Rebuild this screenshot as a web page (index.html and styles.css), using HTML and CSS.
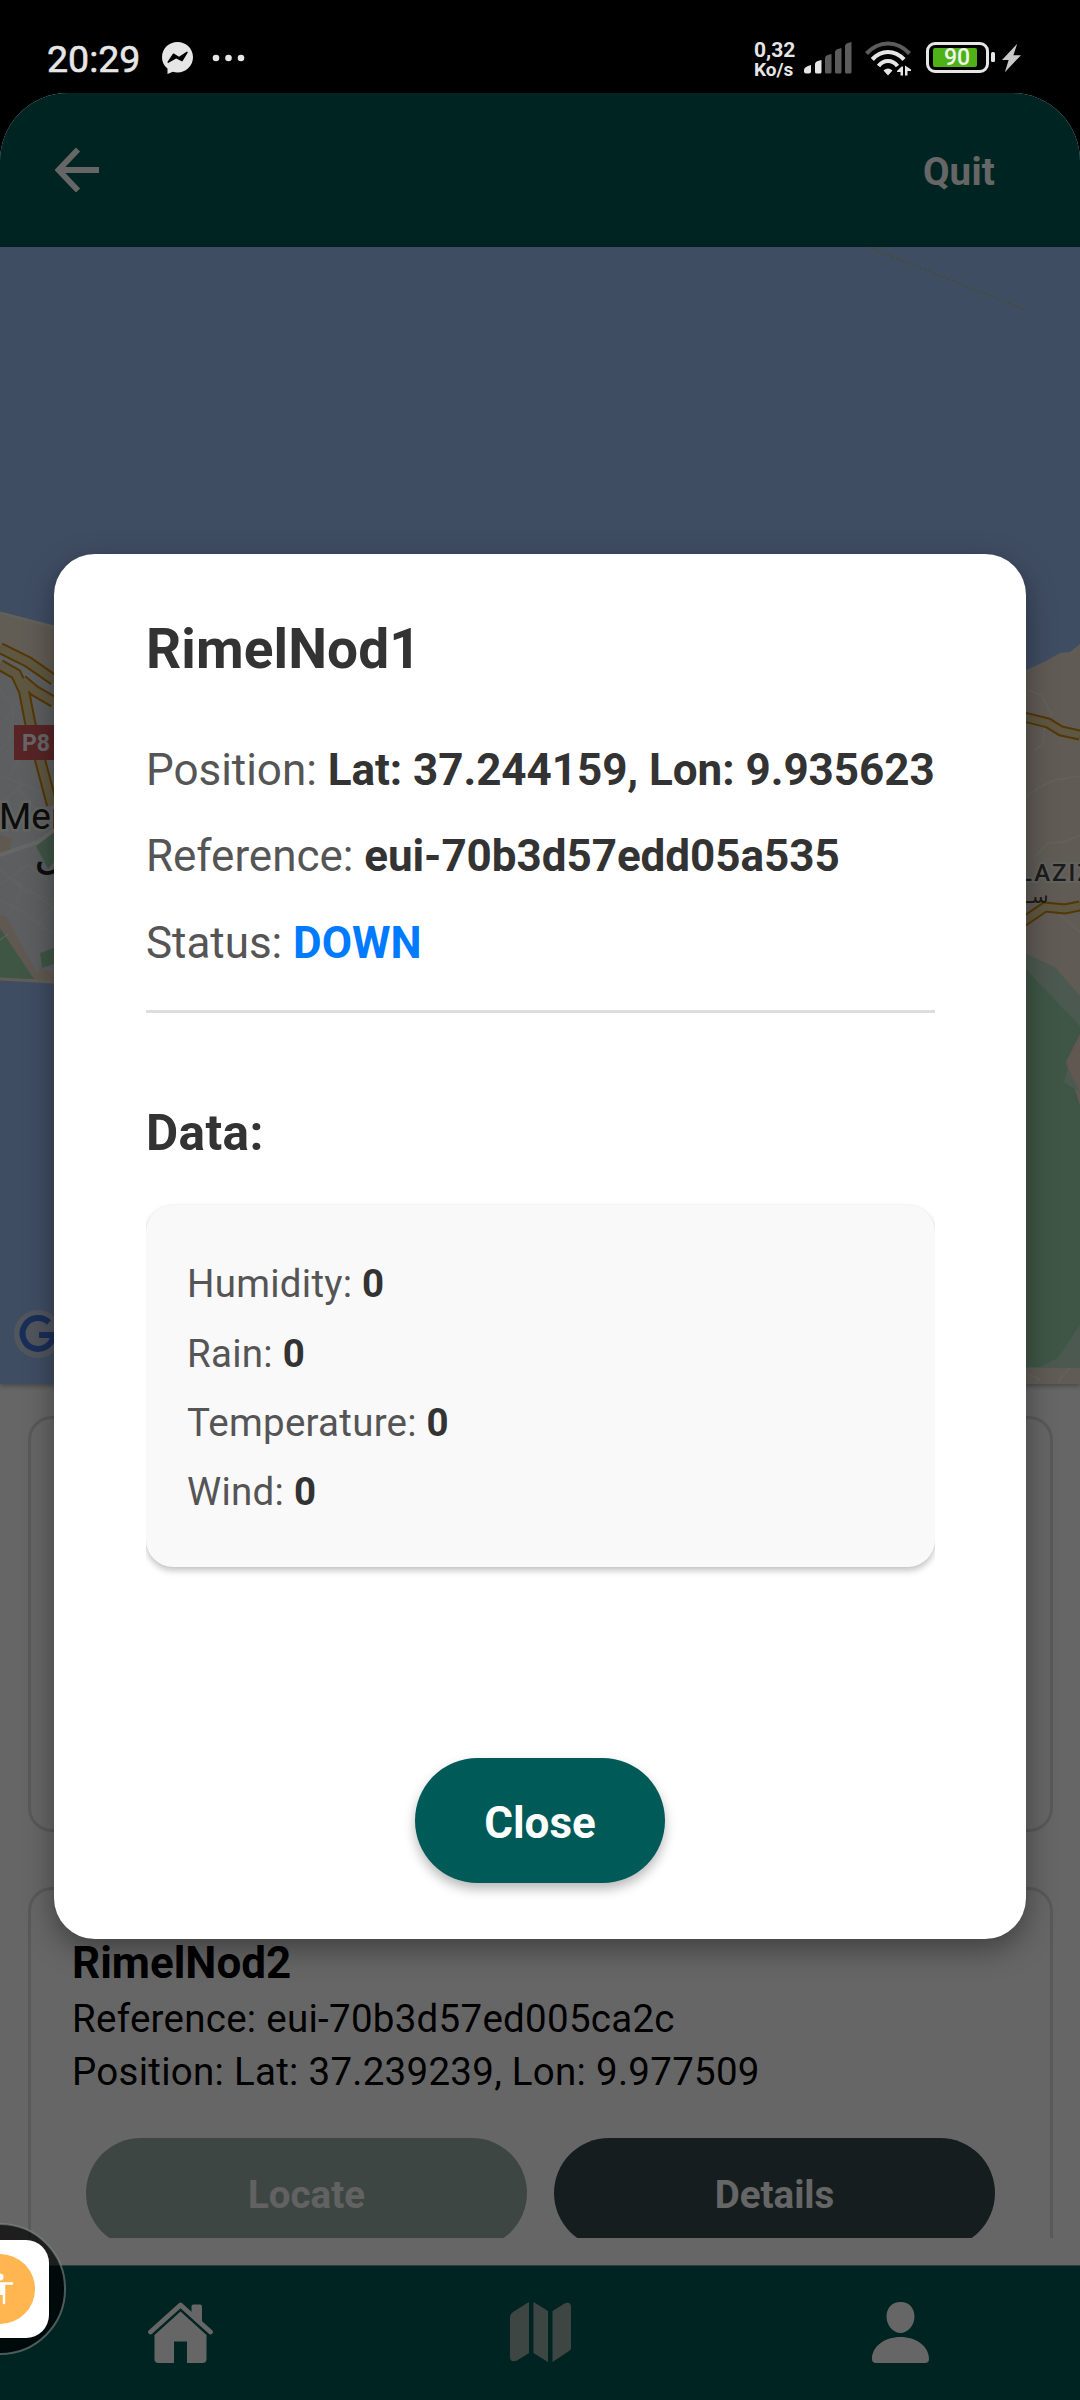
FILE: index.html
```html
<!DOCTYPE html>
<html lang="en">
<head>
<meta charset="utf-8">
<title>Nodes</title>
<link rel="stylesheet" href="styles.css">
</head>
<body>
<div class="phone">
  <div class="status">
    <div class="status-left">
      <span class="clock">20:29</span>
      <svg class="messenger" viewBox="0 0 31 32"><path fill="#e6e6e6" d="M15.500 0C7 0 0 6.600 0 15.200c0 4.500 1.900 8.400 5.500 11.200V32l5.300-2.300c1.500.5 3.100.7 4.700.7C24 30.400 31 23.800 31 15.200S24 0 15.500 0Z"/><path d="M6.200 20.200 11.500 12.200 17 15.700 25 10.300 20 18.700 14.200 15.500Z" fill="#000" stroke="#000" stroke-width="1.500" stroke-linejoin="round"/></svg>
      <svg class="dots" viewBox="0 0 34 8" fill="#e6e6e6"><circle cx="4" cy="4" r="3.300"/><circle cx="16.500" cy="4" r="3.300"/><circle cx="29" cy="4" r="3.300"/></svg>
    </div>
    <div class="status-right">
      <div class="speed"><span>0,32</span><span class="unit">Ko/s</span></div>
      <svg class="signal" viewBox="0 0 48 32" fill="#e6e6e6"><path d="M0 28q0-3 7-5v6.500q0 2-2 2H2q-2 0-2-2Z"/><path d="M11 22q0-3 6.500-4v12q0 1.500-1.500 1.500h-3.500q-1.500 0-1.500-1.500Z"/><g fill="#5c5c5c"><path d="M21 16q0-3 6.500-4v18q0 1.500-1.500 1.500h-3.500q-1.500 0-1.500-1.500Z"/><path d="M31 10q0-3 6.500-4v24q0 1.500-1.500 1.500h-3.500q-1.500 0-1.500-1.500Z"/><path d="M41 4q0-3 6.500-4v30q0 1.500-1.500 1.500h-3.500q-1.500 0-1.500-1.500Z"/></g></svg>
      <svg class="wifi" viewBox="0 0 46 35" fill="none" stroke="#e6e6e6" stroke-width="4.200"><path d="M1.500 12.500Q11 2.500 23 2.500t21.500 10" stroke="#5c5c5c"/><path d="M7.300 18.500Q14 11 23 11t16 7.500M13.500 25Q17.500 20 23 20t9.500 5"/><path fill="#e6e6e6" stroke="none" d="M18.500 29.500Q23 25.500 27.500 29.500L23 34.500ZM32 30l4.500-4.500h1.500v9h-2.500v-3.500H32ZM40 24.500V34.500h2.500v-4.500H46v-1.500Z"/></svg>
      <div class="battery"><div class="cell"><span>90</span></div></div>
      <svg class="nub" viewBox="0 0 4 10"><rect width="4" height="10" rx="1.500" fill="#e6e6e6"/></svg>
      <svg class="bolt" viewBox="0 0 20 30"><path fill="#c9c9c9" d="M16 0 0 17h7L3 30 20 12h-8Z"/></svg>
    </div>
  </div>

  <div class="app">
    <header class="topbar">
      <svg class="back" viewBox="0 0 44 44"><path d="M23 1.500 3.500 22l19.500 20.500M3.500 22H44" fill="none" stroke="#fff" stroke-width="5.800"/></svg>
      <span class="quit">Quit</span>
    </header>

    <svg class="map" viewBox="0 247 1080 1137">
      <rect y="247" width="1080" height="1137" fill="#9ec1f8"/>
      <path d="M868 247 1024 309" fill="none" stroke="#b0b97e" stroke-width="1.400" stroke-dasharray="3 2"/>
      <!-- west shore -->
      <path d="M0 613 54 627H120V982H54L0 979Z" fill="#e6ecf0"/>
      <path d="M0 613 54 627V676L0 644Z" fill="#f2e5d2"/>
      <path d="M0 613 54 627" stroke="#f3efdf" stroke-width="3"/>
      <g stroke="#f8f6f0" stroke-width="1.200" fill="none" opacity=".75">
        <path d="M0 690 20 715M10 697l15 15M6 720l18-28M0 750l14-14M14 710l-5 28M25 665l24 22M0 775l54 22M10 778l10-22 20 6M0 805l22-20M16 786l20 24M0 870l54 38M0 885l28-20 24 20M8 915l14-25 32 10M0 900l20 10 34 24M14 880l12 14M36 925l18-18M38 930l5-2"/>
      </g>
      <g fill="none" stroke="#cf8a0a" stroke-width="12"><path d="M0 648 28 662 54 680M0 665 16 674 24 691 30 722 52 805M22 680 35 691 54 702"/></g>
      <g fill="none" stroke="#ecd9a4" stroke-width="8"><path d="M0 648 28 662 54 680M0 665 16 674 24 691 30 722 52 805M22 680 35 691 54 702"/></g>
      <path d="M0 835l12 3-2 12-10 3Z" fill="#f0dfcb"/>
      <path d="M36 846 54 832V862l-6 7Z" fill="#9dd2ae"/>
      <path d="M0 855 38 842 54 830" fill="none" stroke="#fff" stroke-width="4"/>
      <path d="M0 915 6 916 40 979H0Z" fill="#f0dfcb"/>
      <path d="M0 928 34 979H0Z" fill="#9dd7ad"/>
      <path d="M0 940l8-6" stroke="#fff"/>
      <path d="M40 953 54 948V964L42 968Z" fill="#9dd7ad"/>
      <path d="M36 982 40 966 54 975V983Z" fill="#f0dfcb"/>
      <path d="M0 979 54 982" stroke="#f3e9d7" stroke-width="3"/>
      <rect x="14" y="725" width="60" height="35" fill="#dc5a5f"/>
      <text class="road-no" x="22" y="751">P8</text>
      <text class="town" x="-1" y="829">Men</text>
      <text class="town-ar" x="34" y="868">ل</text>
      <!-- east shore -->
      <path d="M1000 672 1026 670 1044 662 1060 653 1070 652 1080 644V1384H1000Z" fill="#f0e4d5"/>
      <g fill="none" stroke="#fffdf7" stroke-width="1.500" opacity=".6"><path d="M1029 690 1042 696 1048 708 1052 714 1045 722 1043 743 1035 750M1026 797 1040 787 1055 780 1080 776M1037 855 1048 843 1064 842 1080 835M1060 915 1080 932M1058 1382 1080 1355M1028 1374 1040 1379 1034 1384"/></g>
      <g fill="none" stroke="#cf8a0a" stroke-width="11"><path d="M1020 716 1048 723 1061 731 1080 735M1020 924 1045 907 1065 909 1080 906"/></g>
      <g fill="none" stroke="#ecd9a4" stroke-width="7"><path d="M1020 716 1048 723 1061 731 1080 735M1020 924 1045 907 1065 909 1080 906"/></g>
      <path d="M1020 951 1055 967 1080 996V1368H1020Z" fill="#bfdfc9"/>
      <path d="M1020 963 1080 1026V1325L1058 1358 1040 1367H1020Z" fill="#9fd7ae"/>
      <path d="M1080 1034 1066 1062 1080 1105Z" fill="#f0dccb"/>
      <path d="M1068 1068 1064 1082 1080 1092Z" fill="#bfdfc9"/>
      <text class="district" x="1019" y="881">LAZIZ</text>
      <text class="district-ar" x="1026" y="903">سـ</text>
      <!-- map provider logo -->
      <circle cx="38" cy="1334" r="24" fill="#d4dae0" opacity=".8"/>
      <path d="M49 1322.500A15.500 15.500 0 1 0 53.500 1335H39" fill="none" stroke="#3f74df" stroke-width="6"/>
    </svg>

    <main class="list">
      <article class="node node-first"></article>
      <article class="node node-second">
        <h3>RimelNod2</h3>
        <p>Reference: eui-70b3d57ed005ca2c</p>
        <p>Position: Lat: 37.239239, Lon: 9.977509</p>
        <div class="actions"><span class="btn locate">Locate</span><span class="btn details">Details</span></div>
      </article>
    </main>

    <nav class="tabs">
      <svg class="tab-home" viewBox="0 0 65 62" fill="#fff"><path d="M2.500 30 32.500 3 62.500 30" fill="none" stroke="#fff" stroke-width="4.800" stroke-linecap="round" stroke-linejoin="round"/><path d="M43.500 10V4.500q0-2 2-2H52q2 0 2 2V21L43.500 12Z"/><path d="M32.500 9.500 58.500 33V57q0 4-4 4H39V39.500H26V61H10.500q-4 0-4-4V33Z"/></svg>
      <svg class="tab-map" viewBox="0 0 61 60" fill="#9bafaa"><path d="M19 0V51L7 58.500Q0 61 0 55V15q0-3 3-5Z"/><path d="M23.500 0 38 9V60L23.500 51Z"/><path d="M42.500 9 55 1.200Q61-.8 61 5V46q0 2-2 3L42.500 60Z"/></svg>
      <svg class="tab-user" viewBox="0 0 57 61" fill="#fff"><path d="M28.500 0C37 0 42.500 6 42.500 14.500S36 31 28.500 31 14.500 23 14.500 14.500 20 0 28.500 0ZM28.500 35C44 35 57 44 57 57q0 4-4 4H4q-4 0-4-4C0 44 13 35 28.500 35Z"/></svg>
    </nav>
    <div class="scrim"></div>
  </div>

  <section class="modal">
    <h2>RimelNod1</h2>
    <div class="facts">
      <p>Position: <b>Lat: 37.244159, Lon: 9.935623</b></p>
      <p>Reference: <b>eui-70b3d57edd05a535</b></p>
      <p>Status: <b class="down">DOWN</b></p>
    </div>
    <h4>Data:</h4>
    <div class="data-wrap">
      <div class="data">
        <p>Humidity: <b>0</b></p>
        <p>Rain: <b>0</b></p>
        <p>Temperature: <b>0</b></p>
        <p>Wind: <b>0</b></p>
      </div>
    </div>
    <span class="close">Close</span>
  </section>

  <svg class="float" viewBox="0 0 68 134">
    <circle cx="0" cy="67" r="65" fill="#000" fill-opacity=".7" stroke="#7d8888" stroke-opacity=".6" stroke-width="2"/>
    <rect x="-49" y="18" width="98" height="98" rx="23" fill="#fff"/>
    <circle cx="0" cy="67" r="35" fill="#ffb650"/>
    <circle cx="0" cy="55" r="3.500" fill="#fff"/>
    <path d="M0 61.500H12M4 61.500V81M-4 61.500V81" fill="none" stroke="#fff" stroke-width="2.500" stroke-linecap="round"/>
    <rect x="-5" y="61" width="10" height="12" fill="#fff"/>
  </svg>
</div>
</body>
</html>
```
FILE: styles.css
```css
* { box-sizing: border-box; }
body { margin: 0; background: #000; font-family: Roboto, sans-serif; }
h2, h3, h4, p { margin: 0; }
svg { display: block; flex: none; }

.phone { position: relative; width: 1080px; height: 2400px; overflow: hidden; display: flex; flex-direction: column; background: #000; }

/* status bar */
.status { height: 93px; padding: 0 59px 0 47px; display: flex; justify-content: space-between; color: #e6e6e6; }
.status-left, .status-right { display: flex; }
.clock { width: 115px; padding-top: 36px; font-size: 37.5px; line-height: 46px; font-weight: 400; -webkit-text-stroke: .6px #e6e6e6; }
.messenger { width: 31px; height: 32px; margin-top: 42px; }
.dots { width: 34px; height: 8px; margin: 54px 0 0 19px; }
.speed { width: 50px; padding-top: 39px; display: flex; flex-direction: column; font-size: 21px; line-height: 22px; font-weight: 700; }
.speed .unit { font-size: 19px; line-height: 18px; }
.signal { width: 48px; height: 32px; margin-top: 42px; }
.wifi { width: 46px; height: 35px; margin: 41px 0 0 13px; }
.battery { width: 63px; height: 31px; margin: 42px 0 0 15px; padding: 3px 4px; border: 3px solid #e6e6e6; border-radius: 9px; }
.cell { width: 44px; height: 19px; border-radius: 2px; background: #4fb118; display: flex; justify-content: center; }
.cell span { font-size: 23px; line-height: 20px; padding-left: 4px; font-weight: 500; color: #f0f5ea; }
.nub { width: 4px; height: 10px; margin: 52px 0 0 2px; }
.bolt { width: 19px; height: 30px; margin: 43px 0 0 7px; }

/* screen behind the dialog */
.app { position: relative; flex: 1; display: flex; flex-direction: column; background: #fff; border-radius: 68px 68px 0 0; overflow: hidden; }
.topbar { height: 154px; flex: none; padding: 0 85px 0 55px; display: flex; justify-content: space-between; align-items: center; background: #005b56; color: #fff; }
.back { width: 44px; height: 44px; }
.quit { font-size: 38.5px; font-weight: 700; line-height: 46px; padding-top: 3px; letter-spacing: .2px; }
.map { width: 1080px; height: 1137px; box-shadow: 0 2px 5px rgba(0, 0, 0, .3); }
.road-no { font: 700 23px Roboto, sans-serif; fill: #fff; }
.town { font: 400 37px Roboto, sans-serif; fill: #222; stroke: #fff; stroke-width: 5px; stroke-opacity: .7; paint-order: stroke; }
.town-ar { font: 400 44px "DejaVu Sans", sans-serif; fill: #222; }
.district { font: 500 24px Roboto, sans-serif; letter-spacing: 2px; fill: #444; stroke: #fff; stroke-width: 4px; stroke-opacity: .6; paint-order: stroke; }
.district-ar { font: 400 20px "DejaVu Sans", sans-serif; fill: #444; }

.list { height: 854px; flex: none; padding: 32px 27px 0 28px; overflow: hidden; display: flex; flex-direction: column; gap: 55px; }
.node { flex: none; border: 3px solid #dedede; border-radius: 24px; }
.node-first { height: 416px; }
.node-second { height: 430px; padding: 45px 42px 0 41px; color: #000; }
.node h3 { font-size: 44px; line-height: 56px; font-weight: 700; }
.node p { font-size: 38.5px; line-height: 53px; letter-spacing: .27px; }
.node h3 + p { padding-top: 1px; }
.actions { display: flex; gap: 27px; padding: 40px 0 0 14px; }
.btn { flex: none; width: 441px; height: 110px; border-radius: 55px; font-size: 38.5px; line-height: 113px; font-weight: 700; text-align: center; color: #fff; }
.locate { background: #9bafaa; color: #f4f4f4; }
.details { background: #354a4b; }

.tabs { margin-top: auto; height: 135px; flex: none; border-top: 1px solid #6f9996; background: #005b56; display: grid; grid-template-columns: repeat(3, 1fr); justify-items: center; padding-top: 36px; }
.tab-home { width: 65px; height: 62px; }
.tab-map { width: 61px; height: 60px; }
.tab-user { width: 57px; height: 61px; }
.scrim { position: absolute; inset: 0; background: rgba(0, 0, 0, .6); }

/* dialog */
.modal { position: absolute; left: 54px; top: 554px; width: 972px; height: 1385px; padding: 63px 91px 56px 92px; border-radius: 41px; background: #fff; box-shadow: 0 10px 30px rgba(0, 0, 0, .38); display: flex; flex-direction: column; color: #333; }
.modal h2 { font-size: 55px; line-height: 64px; font-weight: 700; letter-spacing: .1px; }
.facts { margin-top: 46px; padding-bottom: 24px; border-bottom: 3px solid #ddd; font-size: 44px; line-height: 86.3px; color: #555; white-space: nowrap; letter-spacing: -.04px; }
.facts b { color: #333; }
.facts .down { color: #007aff; }
.modal h4 { margin-top: 91px; font-size: 49.5px; line-height: 58px; font-weight: 700; letter-spacing: .4px; }
.data-wrap { margin-top: 31px; padding: 12px 0 20px; overflow: hidden; flex: none; }
.data { height: 362px; padding: 44.5px 41px; border-radius: 27px; background: #f9f9f9; box-shadow: 0 4px 6px rgba(0, 0, 0, .22), 0 0 2px rgba(0, 0, 0, .08); font-size: 38.5px; line-height: 69.3px; letter-spacing: .25px; color: #555; }
.data b { color: #333; }
.close { margin-top: auto; margin-right: 1px; align-self: center; width: 250px; height: 125px; border-radius: 62.5px; background: #005b58; color: #fff; font-size: 44px; line-height: 130px; font-weight: 700; text-align: center; box-shadow: 0 6px 12px rgba(0, 0, 0, .28); }

/* floating accessibility shortcut */
.float { position: absolute; left: 0; top: 2222px; width: 68px; height: 134px; }
```
